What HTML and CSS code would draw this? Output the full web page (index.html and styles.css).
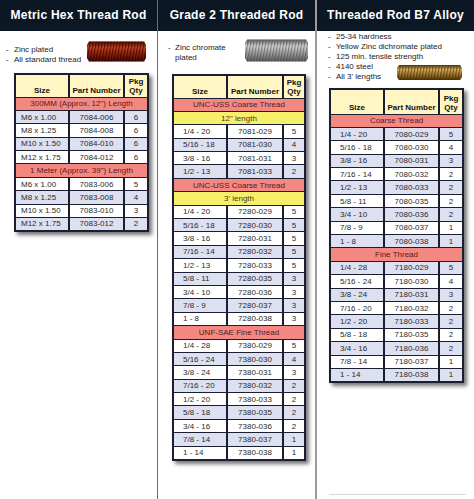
FILE: index.html
```html
<!DOCTYPE html>
<html>
<head>
<meta charset="utf-8">
<link rel="stylesheet" href="styles.css">
</head>
<body>
<div class="page">
  <section class="col col1">
    <h2 class="title">Metric Hex Thread Rod</h2>
    <div class="intro intro1">
      <ul class="bullets">
        <li>Zinc plated</li>
        <li>All standard thread</li>
      </ul>
      <svg class="rod rod1" width="59" height="23" viewBox="0 0 59 23">
        <defs>
          <linearGradient id="gRed" x1="0" y1="0" x2="0" y2="1">
            <stop offset="0" stop-color="#4a0802"/>
            <stop offset="0.3" stop-color="#d24a20"/>
            <stop offset="0.55" stop-color="#a82a10"/>
            <stop offset="1" stop-color="#3e0602"/>
          </linearGradient>
          <pattern id="pRed" width="3" height="23" patternUnits="userSpaceOnUse" patternTransform="skewX(-10)">
            <rect width="1.3" height="23" fill="#2e0400" opacity="0.75"/>
          </pattern>
        </defs>
        <path d="M2 1.5 L57 1.5 L59 5 L59 18 L57 21.5 L2 21.5 L0 18 L0 5 Z" fill="url(#gRed)"/>
        <path d="M2 1.5 L57 1.5 L59 5 L59 18 L57 21.5 L2 21.5 L0 18 L0 5 Z" fill="url(#pRed)"/>
      </svg>
    </div>
    <table class="grid grid-metric">
      <colgroup><col class="w-size"><col class="w-part"><col class="w-qty"></colgroup>
      <thead><tr><th>Size</th><th>Part Number</th><th>Pkg<br>Qty</th></tr></thead>
      <tbody>
        <tr class="sec"><td colspan="3">300MM (Approx. 12") Length</td></tr>
        <tr class="lav"><td>M6 x 1.00</td><td>7084-006</td><td>6</td></tr>
        <tr><td>M8 x 1.25</td><td>7084-008</td><td>6</td></tr>
        <tr class="lav"><td>M10 x 1.50</td><td>7084-010</td><td>6</td></tr>
        <tr><td>M12 x 1.75</td><td>7084-012</td><td>6</td></tr>
        <tr class="sec"><td colspan="3">1 Meter (Approx. 39") Length</td></tr>
        <tr><td>M6 x 1.00</td><td>7083-006</td><td>5</td></tr>
        <tr class="lav"><td>M8 x 1.25</td><td>7083-008</td><td>4</td></tr>
        <tr><td>M10 x 1.50</td><td>7083-010</td><td>3</td></tr>
        <tr class="lav"><td>M12 x 1.75</td><td>7083-012</td><td>2</td></tr>
      </tbody>
    </table>
  </section>

  <section class="col col2">
    <h2 class="title">Grade 2 Threaded Rod</h2>
    <div class="intro intro2">
      <ul class="bullets bullets2">
        <li><span>Zinc chromate<br>plated</span></li>
      </ul>
      <svg class="rod rod2" width="63" height="25" viewBox="0 0 63 25">
        <defs>
          <linearGradient id="gGrey" x1="0" y1="0" x2="0" y2="1">
            <stop offset="0" stop-color="#5e5e5e"/>
            <stop offset="0.3" stop-color="#dcdcdc"/>
            <stop offset="0.6" stop-color="#a4a4a4"/>
            <stop offset="1" stop-color="#585858"/>
          </linearGradient>
          <pattern id="pGrey" width="3" height="25" patternUnits="userSpaceOnUse" patternTransform="skewX(-10)">
            <rect width="1.3" height="25" fill="#444" opacity="0.55"/>
          </pattern>
        </defs>
        <path d="M2 1.5 L61 1.5 L63 5 L63 20 L61 23.5 L2 23.5 L0 20 L0 5 Z" fill="url(#gGrey)"/>
        <path d="M2 1.5 L61 1.5 L63 5 L63 20 L61 23.5 L2 23.5 L0 20 L0 5 Z" fill="url(#pGrey)"/>
      </svg>
    </div>
    <table class="grid grid-g2">
      <colgroup><col class="w-size"><col class="w-part"><col class="w-qty"></colgroup>
      <thead><tr><th>Size</th><th>Part Number</th><th>Pkg<br>Qty</th></tr></thead>
      <tbody>
        <tr class="sec"><td colspan="3">UNC-USS Coarse Thread</td></tr>
        <tr class="len"><td colspan="3">12" length</td></tr>
        <tr><td>1/4 - 20</td><td>7081-029</td><td>5</td></tr>
        <tr class="lav"><td>5/16 - 18</td><td>7081-030</td><td>4</td></tr>
        <tr><td>3/8 - 16</td><td>7081-031</td><td>3</td></tr>
        <tr class="lav"><td>1/2 - 13</td><td>7081-033</td><td>2</td></tr>
        <tr class="sec"><td colspan="3">UNC-USS Coarse Thread</td></tr>
        <tr class="len"><td colspan="3">3' length</td></tr>
        <tr><td>1/4 - 20</td><td>7280-029</td><td>5</td></tr>
        <tr class="lav"><td>5/16 - 18</td><td>7280-030</td><td>5</td></tr>
        <tr><td>3/8 - 16</td><td>7280-031</td><td>5</td></tr>
        <tr class="lav"><td>7/16 - 14</td><td>7280-032</td><td>5</td></tr>
        <tr><td>1/2 - 13</td><td>7280-033</td><td>5</td></tr>
        <tr class="lav"><td>5/8 - 11</td><td>7280-035</td><td>3</td></tr>
        <tr><td>3/4 - 10</td><td>7280-036</td><td>3</td></tr>
        <tr class="lav"><td>7/8 - 9</td><td>7280-037</td><td>3</td></tr>
        <tr><td>1 - 8</td><td>7280-038</td><td>3</td></tr>
        <tr class="sec"><td colspan="3">UNF-SAE Fine Thread</td></tr>
        <tr><td>1/4 - 28</td><td>7380-029</td><td>5</td></tr>
        <tr class="lav"><td>5/16 - 24</td><td>7380-030</td><td>4</td></tr>
        <tr><td>3/8 - 24</td><td>7380-031</td><td>3</td></tr>
        <tr class="lav"><td>7/16 - 20</td><td>7380-032</td><td>2</td></tr>
        <tr><td>1/2 - 20</td><td>7380-033</td><td>2</td></tr>
        <tr class="lav"><td>5/8 - 18</td><td>7380-035</td><td>2</td></tr>
        <tr><td>3/4 - 16</td><td>7380-036</td><td>2</td></tr>
        <tr class="lav"><td>7/8 - 14</td><td>7380-037</td><td>1</td></tr>
        <tr><td>1 - 14</td><td>7380-038</td><td>1</td></tr>
      </tbody>
    </table>
  </section>

  <section class="col col3">
    <h2 class="title">Threaded Rod B7 Alloy</h2>
    <div class="intro3">
      <ul class="bullets bullets3">
        <li class="wide">25-34 hardness</li>
        <li class="wide">Yellow Zinc dichromate plated</li>
        <li class="wide">125 min. tensile strength</li>
        <li>4140 steel</li>
        <li>All 3' lengths</li>
      </ul>
      <svg class="rod rod3" width="65" height="17" viewBox="0 0 65 17">
        <defs>
          <linearGradient id="gGold" x1="0" y1="0" x2="0" y2="1">
            <stop offset="0" stop-color="#5a3a08"/>
            <stop offset="0.3" stop-color="#dcb466"/>
            <stop offset="0.6" stop-color="#a8802e"/>
            <stop offset="1" stop-color="#4e3206"/>
          </linearGradient>
          <pattern id="pGold" width="3" height="17" patternUnits="userSpaceOnUse" patternTransform="skewX(-10)">
            <rect width="1.3" height="17" fill="#3a2604" opacity="0.6"/>
          </pattern>
        </defs>
        <path d="M2 1 L63 1 L65 4 L65 13 L63 16 L2 16 L0 13 L0 4 Z" fill="url(#gGold)"/>
        <path d="M2 1 L63 1 L65 4 L65 13 L63 16 L2 16 L0 13 L0 4 Z" fill="url(#pGold)"/>
      </svg>
    </div>
    <table class="grid grid-b7">
      <colgroup><col class="w-size"><col class="w-part"><col class="w-qty"></colgroup>
      <thead><tr><th>Size</th><th>Part Number</th><th>Pkg<br>Qty</th></tr></thead>
      <tbody>
        <tr class="sec"><td colspan="3">Coarse Thread</td></tr>
        <tr class="lav"><td>1/4 - 20</td><td>7080-029</td><td>5</td></tr>
        <tr><td>5/16 - 18</td><td>7080-030</td><td>4</td></tr>
        <tr class="lav"><td>3/8 - 16</td><td>7080-031</td><td>3</td></tr>
        <tr><td>7/16 - 14</td><td>7080-032</td><td>2</td></tr>
        <tr class="lav"><td>1/2 - 13</td><td>7080-033</td><td>2</td></tr>
        <tr><td>5/8 - 11</td><td>7080-035</td><td>2</td></tr>
        <tr class="lav"><td>3/4 - 10</td><td>7080-036</td><td>2</td></tr>
        <tr><td>7/8 - 9</td><td>7080-037</td><td>1</td></tr>
        <tr class="lav"><td>1 - 8</td><td>7080-038</td><td>1</td></tr>
        <tr class="sec"><td colspan="3">Fine Thread</td></tr>
        <tr class="lav"><td>1/4 - 28</td><td>7180-029</td><td>5</td></tr>
        <tr><td>5/16 - 24</td><td>7180-030</td><td>4</td></tr>
        <tr class="lav"><td>3/8 - 24</td><td>7180-031</td><td>3</td></tr>
        <tr><td>7/16 - 20</td><td>7180-032</td><td>2</td></tr>
        <tr class="lav"><td>1/2 - 20</td><td>7180-033</td><td>2</td></tr>
        <tr><td>5/8 - 18</td><td>7180-035</td><td>2</td></tr>
        <tr class="lav"><td>3/4 - 16</td><td>7180-036</td><td>2</td></tr>
        <tr><td>7/8 - 14</td><td>7180-037</td><td>1</td></tr>
        <tr class="lav"><td>1 - 14</td><td>7180-038</td><td>1</td></tr>
      </tbody>
    </table>
    <div class="foot-rule"></div>
  </section>
</div>
</body>
</html>
```

FILE: styles.css
```css
html, body {
  margin: 0;
  padding: 0;
  background: #ffffff;
}
body {
  width: 474px;
  height: 499px;
  overflow: hidden;
  font-family: "Liberation Sans", Arial, sans-serif;
  color: #2a2a2a;
}
.page {
  display: flex;
  height: 499px;
}
.col {
  display: flex;
  flex-direction: column;
  height: 499px;
  box-sizing: border-box;
}
.col1 { width: 157px; }
.col2 { width: 158px; border-left: 1px solid #6e6e6e; }
.col3 { width: 159px; border-left: 2px solid #9a9a9a; }

.title {
  margin: 0;
  height: 31px;
  flex: none;
  background: #0c1724;
  color: #ffffff;
  font-size: 12px;
  font-weight: bold;
  letter-spacing: 0.25px;
  line-height: 31px;
  text-align: center;
  white-space: nowrap;
}

.intro {
  display: flex;
  flex: none;
  align-items: flex-start;
}
.intro1 { height: 42px; padding-left: 6px; }
.intro2 { height: 43px; padding-left: 10px; }

.bullets {
  list-style: none;
  margin: 0;
  padding: 0;
  font-size: 8px;
  line-height: 10px;
  color: #222;
}
.bullets li {
  display: flex;
  white-space: nowrap;
}
.bullets li::before {
  content: "-";
  display: block;
  width: 8px;
  flex: none;
}
.intro1 .bullets { margin-top: 14px; }
.bullets2 { margin-top: 12px; }
.bullets2 li::before { width: 7px; }

.rod { display: block; flex: none; }
.rod1 { margin: 9px 11px 0 auto; }
.rod2 { margin: 7px 7px 0 auto; }

/* third column intro: grid so the rod sits beside the last two bullets */
.intro3 {
  flex: none;
  height: 56px;
  padding: 1px 12px 0 11px;
  display: grid;
  grid-template-columns: 1fr 65px;
  grid-template-rows: repeat(5, 10px);
}
.bullets3 { display: contents; }
.bullets3 li { grid-column: 1; }
.bullets3 li.wide { grid-column: 1 / -1; }
.bullets3 li:nth-child(1) { grid-row: 1; }
.bullets3 li:nth-child(2) { grid-row: 2; }
.bullets3 li:nth-child(3) { grid-row: 3; }
.bullets3 li:nth-child(4) { grid-row: 4; }
.bullets3 li:nth-child(5) { grid-row: 5; }
.rod3 {
  grid-column: 2;
  grid-row: 4 / 6;
  align-self: center;
  margin-top: 1px;
}

/* tables */
.grid {
  border-collapse: collapse;
  table-layout: fixed;
  border: 2px solid #1a1e30;
  box-shadow: 3px 3px 4px rgba(0, 0, 0, 0.55);
  font-size: 8px;
  flex: none;
}
.grid-metric { width: 133px; margin-left: 14px; }
.grid-g2 { width: 132px; margin-left: 14px; }
.grid-b7 { width: 133px; margin-left: 12px; }

.grid-metric .w-size { width: 54px; }
.grid-metric .w-part { width: 55px; }
.grid-metric .w-qty { width: 24px; }
.grid-g2 .w-size { width: 54px; }
.grid-g2 .w-part { width: 56px; }
.grid-g2 .w-qty { width: 22px; }
.grid-b7 .w-size { width: 54px; }
.grid-b7 .w-part { width: 55px; }
.grid-b7 .w-qty { width: 24px; }

.grid th, .grid td {
  border: 1px solid #1a1e30;
  padding: 0;
  line-height: 9px;
  text-align: center;
  white-space: nowrap;
  overflow: hidden;
}
.grid th + th, .grid td + td { border-left-width: 2px; }
.grid th {
  background: #fff6c4;
  color: #111;
  font-weight: bold;
  vertical-align: bottom;
  padding-bottom: 2px;
  font-size: 8px;
}
.grid thead tr { height: 23px; }
.grid-b7 thead tr { height: 25px; }
.grid tbody tr { height: 13.4px; background: #ffffff; }
.grid tbody tr.lav { background: #dde0f0; }
.grid tbody td:first-child { text-align: left; padding-left: 9px; }
.grid-metric tbody td:first-child { padding-left: 5px; }
.grid tbody tr.sec td,
.grid tbody tr.len td {
  text-align: center;
  padding-left: 0;
}
.grid tbody tr.sec { background: #f38882; }
.grid tbody tr.sec td { color: #5a1818; }
.grid tbody tr.len { background: #f6ef6a; }
.grid tbody tr.len td { color: #4a3a10; }

.foot-rule {
  margin: auto 8px 4px 12px;
  height: 1px;
  background: #d8d8d8;
}
```
